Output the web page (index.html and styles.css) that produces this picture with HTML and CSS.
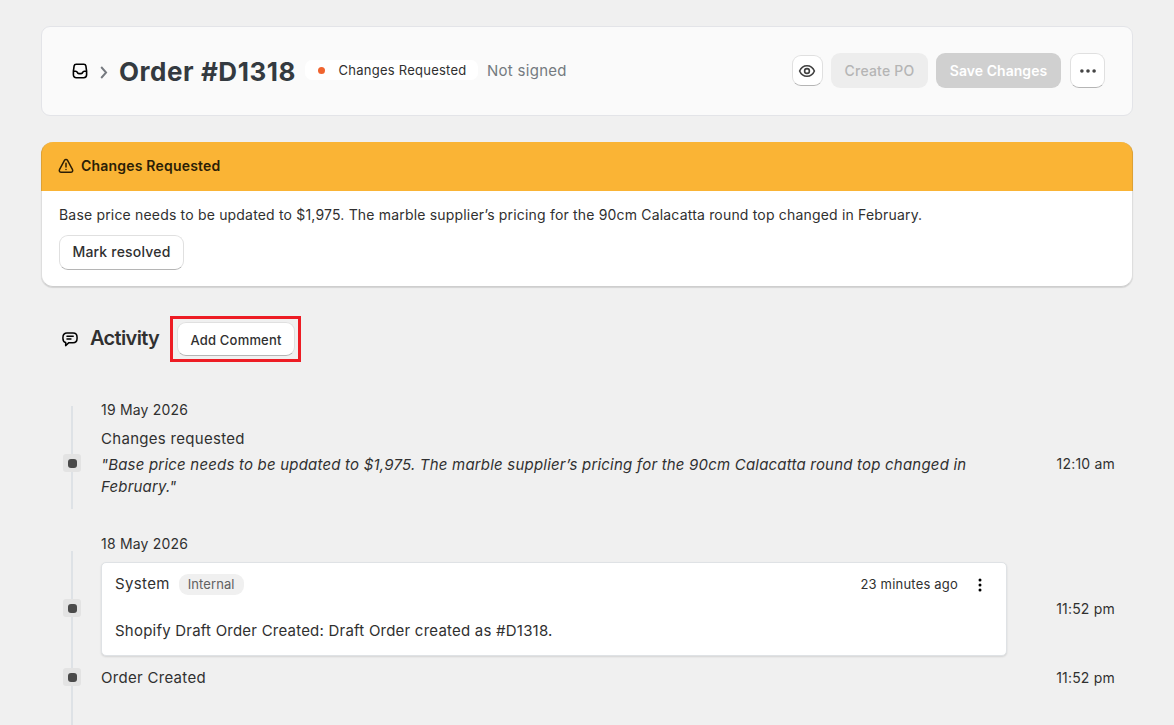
FILE: index.html
```html
<!DOCTYPE html>
<html lang="en">
<head>
<meta charset="utf-8">
<title>Order #D1318</title>
<link rel="stylesheet" href="styles.css">
</head>
<body>
<main class="page">
  <header class="order-header">
    <svg class="icon-inbox" viewBox="0 0 16 16" fill="none" stroke="#000" stroke-width="1.6" stroke-linejoin="round"><path d="M4.200 1.200h7.600c1.200 0 1.900.7 2.100 1.800l.7 5.200v3.600c0 1.800-1.100 2.900-2.900 2.900H4.300c-1.800 0-2.900-1.100-2.900-2.900V8.200l.7-5.200c.2-1.100.9-1.800 2.100-1.800z"/><path d="M1.500 8.300h2.200c.8 0 1.300.4 1.600 1.100.3.8.8 1.200 1.600 1.200h2.200c.8 0 1.300-.4 1.600-1.200.3-.7.8-1.100 1.600-1.100h2.200"/></svg>
    <svg class="icon-chevron" viewBox="0 0 9 13" fill="none" stroke="#75797f" stroke-width="1.900"><path d="M1.200 1l4.900 5.500L1.200 12"/></svg>
    <h1 class="order-title">Order #D1318</h1>
    <span class="status"><i class="status-dot"></i>Changes Requested</span>
    <span class="signature">Not signed</span>
    <div class="actions">
      <button class="btn btn-view" aria-label="View"><svg width="18" height="14" viewBox="0 0 18 14" fill="none" stroke="#3f3f3f" stroke-width="1.6"><path d="M1.600 7C3 3.700 5.600 1.700 9 1.700s6 2 7.400 5.300c-1.400 3.300-4 5.300-7.400 5.300S3 10.300 1.600 7z"/><circle cx="9" cy="7" r="2.400"/></svg></button>
      <button class="btn btn-create" disabled>Create PO</button>
      <button class="btn btn-save" disabled>Save Changes</button>
      <button class="btn btn-more" aria-label="More"><svg width="18" height="4" viewBox="0 0 18 4" fill="#444"><circle cx="2.900" cy="2" r="1.800"/><circle cx="9" cy="2" r="1.800"/><circle cx="15.100" cy="2" r="1.800"/></svg></button>
    </div>
  </header>

  <section class="alert">
    <div class="alert-head">
      <svg width="16" height="16" viewBox="0 0 16 16" fill="none" stroke="#2b1e06" stroke-width="1.500" stroke-linejoin="round" stroke-linecap="round"><path d="M6.600 2.200c.6-1.100 2.200-1.100 2.800 0l5 9.100c.8 1.600 0 3-1.700 3H3.300c-1.700 0-2.500-1.400-1.700-3z"/><path d="M8 5.300v3.600M8 11.500v.1"/></svg>
      <h2 class="alert-title">Changes Requested</h2>
    </div>
    <div class="alert-body">
      <p class="alert-text">Base price needs to be updated to $1,975. The marble supplier’s pricing for the 90cm Calacatta round top changed in February.</p>
      <button class="btn btn-resolve">Mark resolved</button>
    </div>
  </section>

  <div class="activity-head">
    <svg class="icon-chat" width="16" height="15" viewBox="0 0 17 15" preserveAspectRatio="none" fill="none" stroke="#000" stroke-width="1.600" stroke-linecap="round" stroke-linejoin="round"><path d="M5.300 1h6.400c2.600 0 4.300 1.700 4.300 4.200v1.300c0 2.600-1.700 4.200-4.300 4.200H7.300L3.900 13.600v-3.100C2 10.100 1 8.600 1 6.500V5.200C1 2.700 2.700 1 5.300 1z"/><path d="M5.300 4.300h6.600M5.300 7h4.200"/></svg>
    <h2 class="activity-title">Activity</h2>
    <div class="highlight"><button class="btn btn-comment">Add Comment</button></div>
  </div>

  <section class="day day-first">
    <h3 class="date">19 May 2026</h3>
    <div class="event">
      <span class="marker"></span>
      <div class="event-main">
        <p class="event-name">Changes requested</p>
        <p class="quote">"Base price needs to be updated to $1,975. The marble supplier’s pricing for the 90cm Calacatta round top changed in<br>February."</p>
      </div>
      <time class="time">12:10 am</time>
    </div>
  </section>

  <section class="day day-second">
    <h3 class="date">18 May 2026</h3>
    <div class="event">
      <span class="marker"></span>
      <article class="comment">
        <div class="comment-head">
          <span class="author">System</span>
          <span class="tag">Internal</span>
          <span class="ago">23 minutes ago</span>
          <svg width="4" height="14" viewBox="0 0 4 14" fill="#000"><circle cx="2" cy="2" r="1.500"/><circle cx="2" cy="7" r="1.500"/><circle cx="2" cy="12" r="1.500"/></svg>
        </div>
        <p class="comment-text">Shopify Draft Order Created: Draft Order created as #D1318.</p>
      </article>
      <time class="time">11:52 pm</time>
    </div>
    <div class="event event-created">
      <span class="marker"></span>
      <p class="event-name">Order Created</p>
      <time class="time">11:52 pm</time>
    </div>
  </section>
</main>
</body>
</html>
```
FILE: styles.css
```css
* { box-sizing: border-box; }
html, body { height: 100%; }
body {
  margin: 0;
  overflow: hidden;
  background: #f0f0f0;
  color: #303030;
  font: 14px/20px Inter, "Liberation Sans", sans-serif;
}
h1, h2, h3, p { margin: 0; font-weight: 400; }
svg { display: block; flex: none; }

.page { height: 725px; padding: 26px 41px 0; overflow: hidden; }

.order-header {
  display: flex;
  align-items: center;
  height: 90px;
  padding: 0 27px 2px 30px;
  background: #fafafa;
  border: 1px solid #e3e4e8;
  border-radius: 9px;
}
.icon-inbox { width: 16px; height: 16px; margin-top: 1px; }
.icon-chevron { width: 9px; height: 13px; margin: 5px 10px 0 12px; }
.order-title {
  width: 177px;
  padding-top: 3px;
  font-size: 26px;
  line-height: 32px;
  font-weight: 700;
  letter-spacing: .55px;
  color: #343a40;
  white-space: nowrap;
}
.status {
  display: flex;
  align-items: center;
  width: 173px;
  height: 20px;
  margin-left: 9px;
  padding-left: 12.500px;
  background: #fff;
  border-radius: 7px;
  font-size: 13px;
  letter-spacing: .25px;
  white-space: nowrap;
}
.status-dot { width: 7px; height: 7px; margin-right: 14px; border-radius: 50%; background: #f0642f; }
.signature { margin-left: 9px; padding-top: 1px; font-size: 15px; letter-spacing: .28px; color: #747a80; }
.actions { display: flex; align-items: center; margin-left: auto; }

.btn {
  display: flex;
  align-items: center;
  justify-content: center;
  flex: none;
  height: 35px;
  padding: 0;
  border: 0;
  border-radius: 9px;
  font: 550 14px/20px Inter, "Liberation Sans", sans-serif;
  color: #303030;
  white-space: nowrap;
}
.btn-view, .btn-more, .btn-resolve, .btn-comment {
  background: #fff;
  border: 1px solid #e0e0e0;
  border-bottom-color: #b5b5b5;
}
.btn-view { width: 31px; height: 31px; }
.btn-view svg { margin: 1px 1px 0 0; }
.btn-create { width: 97px; margin-left: 8px; padding-top: 2px; background: #ededed; color: #b5b5b5; letter-spacing: .2px; }
.btn-save { width: 125px; margin-left: 8px; padding-top: 2px; background: #d0d0d0; color: #fff; font-weight: 600; letter-spacing: .05px; }
.btn-more { width: 35px; margin-left: 9px; padding-top: 1px; }

.alert {
  height: 145px;
  margin-top: 26px;
  background: #fff;
  border: 1px solid #dedede;
  border-top: 0;
  border-bottom-color: #cecece;
  border-radius: 12px;
  box-shadow: 0 1px 1px rgba(0, 0, 0, .12);
}
.alert-head {
  display: flex;
  align-items: center;
  gap: 7px;
  height: 49px;
  margin: 0 -1px;
  padding: 0 0 1px 16px;
  background: #fab435;
  border: solid #dda135;
  border-width: 0 1px;
  border-radius: 12px 12px 0 0;
}
.alert-title { font-size: 14px; font-weight: 600; letter-spacing: .2px; color: #2b1e06; }
.alert-body { padding: 14px 17px 0; }
.alert-text { letter-spacing: .18px; white-space: nowrap; }
.btn-resolve { width: 125px; height: 35px; margin-top: 10px; padding-bottom: 2px; letter-spacing: .2px; }

.activity-head { display: flex; align-items: center; height: 46px; margin-top: 29px; padding-left: 21px; }
.activity-title {
  width: 70px;
  margin-left: 12px;
  font-size: 20px;
  line-height: 28px;
  font-weight: 600;
  letter-spacing: -.65px;
  transform: translateY(-1px);
}
.highlight {
  display: flex;
  width: 131px;
  height: 46px;
  margin-left: 10px;
  padding: 3px 3px 3px 4px;
  border: 3px solid #ed1c24;
}
.btn-comment { width: 118px; height: 34px; padding-top: 2px; font-size: 13px; letter-spacing: .2px; }

.day { position: relative; }
.day::before {
  content: "";
  position: absolute;
  left: 30px;
  top: 6px;
  width: 2px;
  background: #dee2e6;
}
.day-first { margin-top: 38px; height: 109px; }
.day-first::before { height: 103px; }
.day-second { margin-top: 25px; }
.day-second::before { top: 17px; height: 200px; }
.date { padding-left: 60px; font-size: 14px; line-height: 20px; letter-spacing: .2px; }
.event {
  display: grid;
  grid-template-columns: 18px 906px 1fr;
  column-gap: 20px;
  align-items: center;
  padding: 0 18px 0 22px;
}
.marker {
  position: relative;
  display: grid;
  place-items: center;
  width: 18px;
  height: 18px;
  background: #e3e3e3;
  border-radius: 3px;
}
.marker::after { content: ""; width: 9px; height: 9px; background: #4a4a4a; border-radius: 3px; }
.day-first .event { padding-top: 8px; }
.day-second .marker { margin-bottom: 2px; }
.event-name { font-size: 15px; line-height: 22px; letter-spacing: .3px; }
.quote { margin-top: 4px; font-size: 15px; line-height: 22px; font-style: italic; letter-spacing: .2px; white-space: nowrap; }
.time { text-align: right; letter-spacing: .2px; }
.day-first .time { padding-top: 1px; }
.comment {
  height: 94px;
  padding: 10px 24px 0 13px;
  background: #fff;
  border: 1px solid #dfe2e5;
  border-radius: 5px;
  box-shadow: 0 1px 2px rgba(0, 0, 0, .12);
}
.day-second .event { margin-top: 8px; }
.comment-head { display: flex; align-items: center; height: 21px; }
.comment-head svg { margin-top: 2px; }
.author { font-size: 15px; letter-spacing: .35px; }
.tag {
  height: 21px;
  margin: 2px 0 0 9px;
  padding: 0 9px;
  background: #f0f0f0;
  border-radius: 9px;
  font-size: 13px;
  line-height: 21px;
  letter-spacing: .1px;
  color: #616161;
}
.ago { margin: 0 20px 0 auto; font-size: 13px; letter-spacing: .2px; }
.comment-text { margin-top: 27px; font-size: 15px; letter-spacing: .22px; }
.day-second .event-created { margin-top: 11px; }
```
